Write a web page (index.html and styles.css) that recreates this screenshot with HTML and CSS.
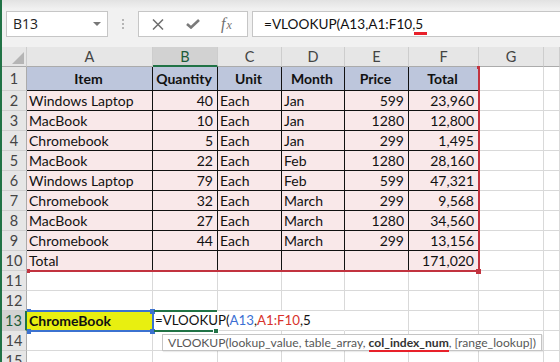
FILE: index.html
```html
<!DOCTYPE html>
<html lang="en">
<head>
  <meta charset="UTF-8" />
  <title>VLOOKUP - Sheet1</title>
  <link rel="stylesheet" href="styles.css">
</head>
<body>
  <div class="app">
    <div class="formula-bar">
      <div class="name-box">B13<span class="caret"></span></div>
      <div class="grip"><span></span><span></span><span></span></div>
      <div class="fx-box">
        <svg class="icon" width="12" height="11" viewBox="0 0 12 11"><path d="M1 0.5 L11 10.5 M11 0.5 L1 10.5" stroke="#6e6e6e" stroke-width="1.5" fill="none"/></svg>
        <svg class="icon" width="14" height="10" viewBox="0 0 14 10"><path d="M1 5 L5 8.5 L13 1" stroke="#7a7a7a" stroke-width="2.6" fill="none"/></svg>
        <span class="fx">f<small>x</small></span>
      </div>
      <div class="formula-input">=VLOOKUP(A13,A1:F10,<span class="squiggle">5</span></div>
    </div>

    <div class="sheet">
      <div class="row head">
        <div class="corner"><span class="tri"></span></div>
        <div class="ch">A</div>
        <div class="ch sel">B</div>
        <div class="ch">C</div>
        <div class="ch">D</div>
        <div class="ch">E</div>
        <div class="ch">F</div>
        <div class="ch">G</div>
        <div class="ch"></div>
      </div>

      <div class="row first">
        <div class="rh">1</div>
        <div class="c th">Item</div>
        <div class="c th">Quantity</div>
        <div class="c th">Unit</div>
        <div class="c th">Month</div>
        <div class="c th">Price</div>
        <div class="c th">Total</div>
        <div class="c"></div><div class="c"></div>
      </div>
      <div class="row">
        <div class="rh">2</div>
        <div class="c t">Windows Laptop</div><div class="c t num">40</div><div class="c t">Each</div>
        <div class="c t">Jan</div><div class="c t num">599</div><div class="c t num">23,960</div>
        <div class="c"></div><div class="c"></div>
      </div>
      <div class="row">
        <div class="rh">3</div>
        <div class="c t">MacBook</div><div class="c t num">10</div><div class="c t">Each</div>
        <div class="c t">Jan</div><div class="c t num">1280</div><div class="c t num">12,800</div>
        <div class="c"></div><div class="c"></div>
      </div>
      <div class="row">
        <div class="rh">4</div>
        <div class="c t">Chromebook</div><div class="c t num">5</div><div class="c t">Each</div>
        <div class="c t">Jan</div><div class="c t num">299</div><div class="c t num">1,495</div>
        <div class="c"></div><div class="c"></div>
      </div>
      <div class="row">
        <div class="rh">5</div>
        <div class="c t">MacBook</div><div class="c t num">22</div><div class="c t">Each</div>
        <div class="c t">Feb</div><div class="c t num">1280</div><div class="c t num">28,160</div>
        <div class="c"></div><div class="c"></div>
      </div>
      <div class="row">
        <div class="rh">6</div>
        <div class="c t">Windows Laptop</div><div class="c t num">79</div><div class="c t">Each</div>
        <div class="c t">Feb</div><div class="c t num">599</div><div class="c t num">47,321</div>
        <div class="c"></div><div class="c"></div>
      </div>
      <div class="row">
        <div class="rh">7</div>
        <div class="c t">Chromebook</div><div class="c t num">32</div><div class="c t">Each</div>
        <div class="c t">March</div><div class="c t num">299</div><div class="c t num">9,568</div>
        <div class="c"></div><div class="c"></div>
      </div>
      <div class="row">
        <div class="rh">8</div>
        <div class="c t">MacBook</div><div class="c t num">27</div><div class="c t">Each</div>
        <div class="c t">March</div><div class="c t num">1280</div><div class="c t num">34,560</div>
        <div class="c"></div><div class="c"></div>
      </div>
      <div class="row">
        <div class="rh">9</div>
        <div class="c t">Chromebook</div><div class="c t num">44</div><div class="c t">Each</div>
        <div class="c t">March</div><div class="c t num">299</div><div class="c t num">13,156</div>
        <div class="c"></div><div class="c"></div>
      </div>
      <div class="row">
        <div class="rh">10</div>
        <div class="c t">Total</div><div class="c t"></div><div class="c t"></div>
        <div class="c t"></div><div class="c t"></div><div class="c t num">171,020</div>
        <div class="c"></div><div class="c"></div>
      </div>
      <div class="row">
        <div class="rh">11</div>
        <div class="c"></div><div class="c"></div><div class="c"></div><div class="c"></div>
        <div class="c"></div><div class="c"></div><div class="c"></div><div class="c"></div>
      </div>
      <div class="row">
        <div class="rh">12</div>
        <div class="c"></div><div class="c"></div><div class="c"></div><div class="c"></div>
        <div class="c"></div><div class="c"></div><div class="c"></div><div class="c"></div>
      </div>
      <div class="row">
        <div class="rh sel">13</div>
        <div class="c lookup">ChromeBook</div>
        <div class="c editing">=VLOOKUP(<span class="ref-a">A13</span>,<span class="ref-b">A1:F10</span>,5</div>
        <div class="c"></div><div class="c"></div><div class="c"></div><div class="c"></div>
      </div>
      <div class="row">
        <div class="rh">14</div>
        <div class="c"></div><div class="c"></div><div class="c"></div><div class="c"></div>
        <div class="c"></div><div class="c"></div><div class="c"></div><div class="c"></div>
      </div>
      <div class="row">
        <div class="rh">15</div>
        <div class="c"></div><div class="c"></div><div class="c"></div><div class="c"></div>
        <div class="c"></div><div class="c"></div><div class="c"></div><div class="c"></div>
      </div>

      <!-- reference highlights drawn while the formula is being edited -->
      <div class="range range-b"></div>
      <span class="handle hb hb-tr"></span>
      <span class="handle hb hb-bl"></span>
      <span class="handle hb hb-br"></span>
      <div class="range range-a"></div>
      <span class="handle ha ha-tl"></span>
      <span class="handle ha ha-tr"></span>
      <span class="handle ha ha-bl"></span>
      <span class="handle ha ha-br"></span>
      <div class="active-cell"></div>
      <span class="handle fill"></span>

      <div class="tooltip">VLOOKUP(lookup_value, table_array, <b>col_index_num</b>, [range_lookup])</div>
    </div>
  </div>
</body>
</html>
```

FILE: styles.css
```css
body {
  margin: 0;
  font-family: Lato, "Liberation Sans", sans-serif;
  background: #fff;
  color: #111;
  overflow: hidden;
}
.app {
  width: 560px;
  height: 362px;
  box-sizing: border-box;
  border-left: 2px solid #217346;
  overflow: hidden;
}

/* Name box + formula bar */
.formula-bar {
  display: flex;
  align-items: flex-start;
  height: 47px;
  box-sizing: border-box;
  padding: 11px 0 0 4px;
  background: linear-gradient(#e2e2e2, #f1f1f1 9px);
}
.name-box, .fx-box, .formula-input {
  height: 26px;
  box-sizing: border-box;
  border: 1px solid #c6c6c6;
  background: #fff;
}
.name-box {
  width: 102px;
  position: relative;
  padding-left: 6px;
  font-family: "Open Sans", sans-serif;
  font-size: 14px;
  line-height: 23px;
  color: #222;
}
.caret {
  position: absolute;
  right: 6px;
  top: 10px;
  border-left: 4px solid transparent;
  border-right: 4px solid transparent;
  border-top: 4px solid #777;
}
.grip {
  width: 30px;
  display: flex;
  flex-direction: column;
  align-items: center;
  gap: 2px;
  padding-top: 8px;
}
.grip span {
  width: 2px;
  height: 2px;
  background: #b5b5b5;
}
.fx-box {
  width: 110px;
  display: flex;
  align-items: center;
  padding-left: 13px;
}
.fx-box .icon:first-child { margin-right: 22px; }
.fx-box .icon + .icon { margin-right: 21px; }
.fx {
  font-family: "Liberation Serif", serif;
  font-style: italic;
  font-size: 16px;
  color: #707070;
  line-height: 1;
}
.fx small {
  font-size: 12px;
  margin-left: 1px;
}
.formula-input {
  flex: 1;
  margin-left: 4px;
  margin-right: -2px;
  padding-left: 11px;
  font-size: 13.6px;
  line-height: 24px;
  color: #111;
}
.squiggle {
  border-bottom: 3px solid #e8202a;
  padding: 0 4px 0 1px;
  margin-left: -1px;
}

/* Grid */
.sheet {
  position: relative;
  font-size: 14px;
}
.row {
  display: grid;
  grid-template-columns: 25px 126px 65px 64px 63px 64px 70px 65px 1fr;
  height: 20px;
}
.row.first { height: 24px; }
.row > div {
  box-sizing: border-box;
  white-space: nowrap;
  overflow: hidden;
}
.head > div {
  background: #e6e6e6;
  border-right: 1px solid #cdcdcd;
  border-bottom: 1px solid #ababab;
  text-align: center;
  line-height: 19px;
  color: #444;
  font-size: 14.5px;
}
.head .ch.sel {
  background: #d2d2d2;
  border-bottom: 2px solid #217346;
  color: #1d5c39;
}
.corner { position: relative; }
.tri {
  position: absolute;
  right: 2px;
  bottom: 2px;
  border-left: 12px solid transparent;
  border-bottom: 12px solid #b5b5b5;
}
.rh {
  background: #e6e6e6;
  border-right: 1px solid #ababab;
  border-bottom: 1px solid #d0d0d0;
  text-align: center;
  line-height: 20px;
  color: #444;
  font-size: 14.5px;
}
.first .rh { line-height: 24px; }
.rh.sel {
  background: #d2d2d2;
  border-right: 2px solid #217346;
  color: #1d5c39;
}
.c {
  border-right: 1px solid #d9d9d9;
  border-bottom: 1px solid #d9d9d9;
  padding: 0 4px 0 2px;
  line-height: 19px;
}
.c.t, .c.th {
  border-right-color: #111;
  border-bottom-color: #111;
  background: #f9e8e9;
}
.c.th {
  background: #bdc6dc;
  font-weight: bold;
  text-align: center;
  line-height: 24px;
}
.c.num { text-align: right; }
.c.lookup {
  background: #e8ef10;
  font-weight: bold;
}
.c.editing {
  grid-column: span 3;
  background: #fff;
  border-right-color: #fff;
  overflow: visible;
  font-size: 13.3px;
}
.ref-a { color: #3b6fd3; }
.ref-b { color: #d8322c; }

/* Overlays: formula reference boxes, active cell, tooltip */
.range {
  position: absolute;
  box-sizing: border-box;
}
.range-b {
  left: 25px;
  top: 20px;
  width: 453px;
  height: 205px;
  border-right: 2px solid #c2333f;
  border-bottom: 2px solid #c2333f;
}
.range-a {
  left: 25px;
  top: 263px;
  width: 127px;
  height: 22px;
  border: 2px solid #3b72d0;
  border-left-color: transparent;
}
.handle {
  position: absolute;
  width: 5px;
  height: 5px;
}
.hb { background: #c2333f; }
.hb-tr { left: 475px; top: 19px; width: 3px; height: 3px; }
.hb-bl { left: 25px; top: 222px; width: 3px; height: 4px; }
.hb-br { left: 474px; top: 222px; }
.ha { background: #3b72d0; }
.ha-tl { left: 25px; top: 262px; width: 4px; height: 3px; }
.ha-tr { left: 148px; top: 262px; }
.ha-bl { left: 25px; top: 282px; width: 4px; }
.ha-br { left: 148px; top: 282px; }
.active-cell {
  position: absolute;
  left: 152px;
  top: 263px;
  width: 63px;
  height: 22px;
  box-sizing: border-box;
  border-top: 2px solid #217346;
  border-bottom: 2px solid #217346;
}
.fill {
  background: #217346;
  left: 211px;
  top: 281px;
  width: 6px;
  height: 6px;
  border: 1px solid #fff;
  box-sizing: border-box;
}
.tooltip {
  position: absolute;
  left: 160px;
  top: 287px;
  width: 380px;
  height: 17px;
  box-sizing: border-box;
  padding-left: 5px;
  border: 1px solid #c4c4c4;
  background: #fff;
  box-shadow: 1px 1px 1px rgba(0, 0, 0, 0.08);
  font-family: Lato, sans-serif;
  font-size: 12.1px;
  line-height: 15px;
  color: #575757;
  white-space: nowrap;
}
.tooltip b {
  color: #333;
  border-bottom: 2px solid #e8202a;
}
```
